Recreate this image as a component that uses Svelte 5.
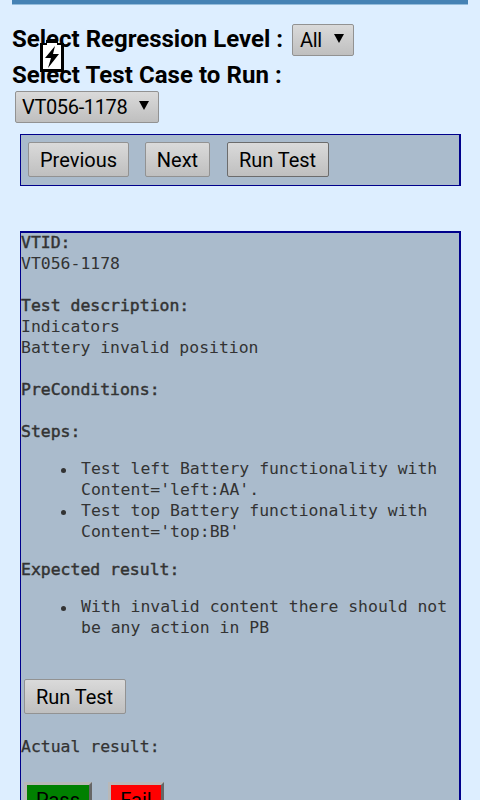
<script>
  const steps = [
    ['Test left Battery functionality with', "Content='left:AA'."],
    ['Test top Battery functionality with', "Content='top:BB'"]
  ];
  const expected = [['With invalid content there should not', 'be any action in PB']];
</script>

<main>
  <div class="rule"></div>
  <div class="field first">
    <b class="l1">Select Regression Level :</b>
    <button class="select all"><span>All</span><svg width="10" height="9" viewBox="0 0 10 9"><path d="M0 0H10L5 9Z" /></svg></button>
  </div>
  <div class="field second"><b class="l2">Select Test Case to Run :</b></div>
  <button class="select case"><span>VT056-1178</span><svg width="10" height="9" viewBox="0 0 10 9"><path d="M0 0H10L5 9Z" /></svg></button>

  <nav>
    <button class="prev"><span>Previous</span></button>
    <button class="next"><span>Next</span></button>
    <button class="run dark"><span>Run Test</span></button>
  </nav>

  <section>
    <h2>VTID:</h2>
    <p>VT056-1178</p>
    <h2 class="gap">Test description:</h2>
    <p>Indicators</p>
    <p>Battery invalid position</p>
    <h2 class="gap">PreConditions:</h2>
    <h2 class="gap">Steps:</h2>
    <ul>
      {#each steps as lines}
        <li>{lines[0]}<br />{lines[1]}</li>
      {/each}
    </ul>
    <h2>Expected result:</h2>
    <ul class="expected">
      {#each expected as lines}
        <li>{lines[0]}<br />{lines[1]}</li>
      {/each}
    </ul>
    <button class="run inner"><span>Run Test</span></button>
    <h2 class="actual">Actual result:</h2>
    <div class="verdict">
      <button class="pass">Pass</button>
      <button class="fail">Fail</button>
    </div>
  </section>

  <svg class="battery" width="24" height="32" viewBox="0 0 24 32">
    <path d="M0 3H6V0H18V3H24V32H0Z" fill="#000" />
    <path d="M3 5H7V3H17V5H21V29H3Z" fill="#fff" />
    <path d="M15 6L5 18H11L8 28L19 14H13Z" fill="#000" />
  </svg>
</main>

<style>
  :global(body) { background: #def; overflow: hidden; }
  main {
    position: relative;
    box-sizing: border-box;
    height: 800px;
    overflow: hidden;
    background: #def;
    padding: 0 12px;
    font-family: Roboto, sans-serif;
    color: #000;
  }
  .rule { height: 4px; background: #4682b4; border-bottom: 1px solid #94bcdb; }
  .field { display: flex; align-items: center; white-space: nowrap; }
  .field b { font-size: 24px; line-height: 32px; width: 280px; }
  .l2 { letter-spacing: 0.06px; }
  .first { height: 32px; margin-top: 19px; }
  .first b { margin-top: -2px; }
  .second { height: 36px; padding-top: 1px; }
  button {
    box-sizing: border-box;
    display: flex;
    align-items: center;
    justify-content: center;
    margin: 0;
    padding: 0;
    height: 35px;
    border: 1.5px solid #929292;
    border-radius: 2px;
    background: linear-gradient(#dadada, #bfbfbf);
    font: 20px Roboto, sans-serif;
    color: #000;
    white-space: nowrap;
    flex: none;
  }
  .select { height: 32px; justify-content: space-between; padding: 0 9px 0 7px; }
  .select svg { margin-top: -3px; }
  .all { width: 62px; }
  .case { width: 144px; margin: -2px 0 0 3px; }
  .all span { letter-spacing: -0.3px; }
  .case span { letter-spacing: -0.35px; margin-left: -1px; }
  nav {
    box-sizing: border-box;
    display: flex;
    width: 441px;
    height: 52px;
    margin: 11px 0 0 8px;
    padding: 7px 0 0 7px;
    border: 1px solid #00008b;
    border-right-width: 2px;
    background: #abc;
  }
  .prev { width: 101px; }
  .next { width: 65px; margin: 0 17px 0 16px; }
  .run { width: 102px; }
  .dark { border-color: #6c6c6c; }
  .dark span, .inner span { letter-spacing: -0.05px; margin-left: -1px; }
  section {
    box-sizing: border-box;
    width: 441px;
    height: 640px;
    margin: 45px 0 0 8px;
    border: solid #00008b;
    border-width: 2px 2px 0 1px;
    background: #abc;
    color: #333;
    font: 16.44px/21px "DejaVu Sans Mono", monospace;
    white-space: nowrap;
  }
  h2, p { margin: 0; font: inherit; }
  h2 { -webkit-text-stroke: 0.45px #333; }
  section > h2:first-child { margin-top: -1px; }
  .gap { margin-top: 21px; }
  ul { margin: 16px 0 17px; padding: 0; list-style: none; }
  li { position: relative; padding-left: 60px; }
  li::before {
    content: "";
    position: absolute;
    left: 40px;
    top: 10px;
    width: 5px;
    height: 5px;
    border-radius: 50%;
    background: #333;
  }
  .expected { margin-bottom: 0; }
  .inner { margin: 41px 0 0 3px; height: 35px; }
  section > .actual { margin-top: 22px; -webkit-text-stroke: 0.25px #333; }
  .verdict { display: flex; gap: 16px; margin: 25px 0 0 3px; }
  .verdict button { height: 35px; border: 3px solid; border-color: #b8b8b8 #666 #666 #b8b8b8; border-radius: 0; }
  .verdict .pass { width: 68px; background: green; background-clip: padding-box; }
  .verdict .fail { width: 56px; background: red; background-clip: padding-box; }
  .battery { position: absolute; left: 40px; top: 40px; }
</style>
